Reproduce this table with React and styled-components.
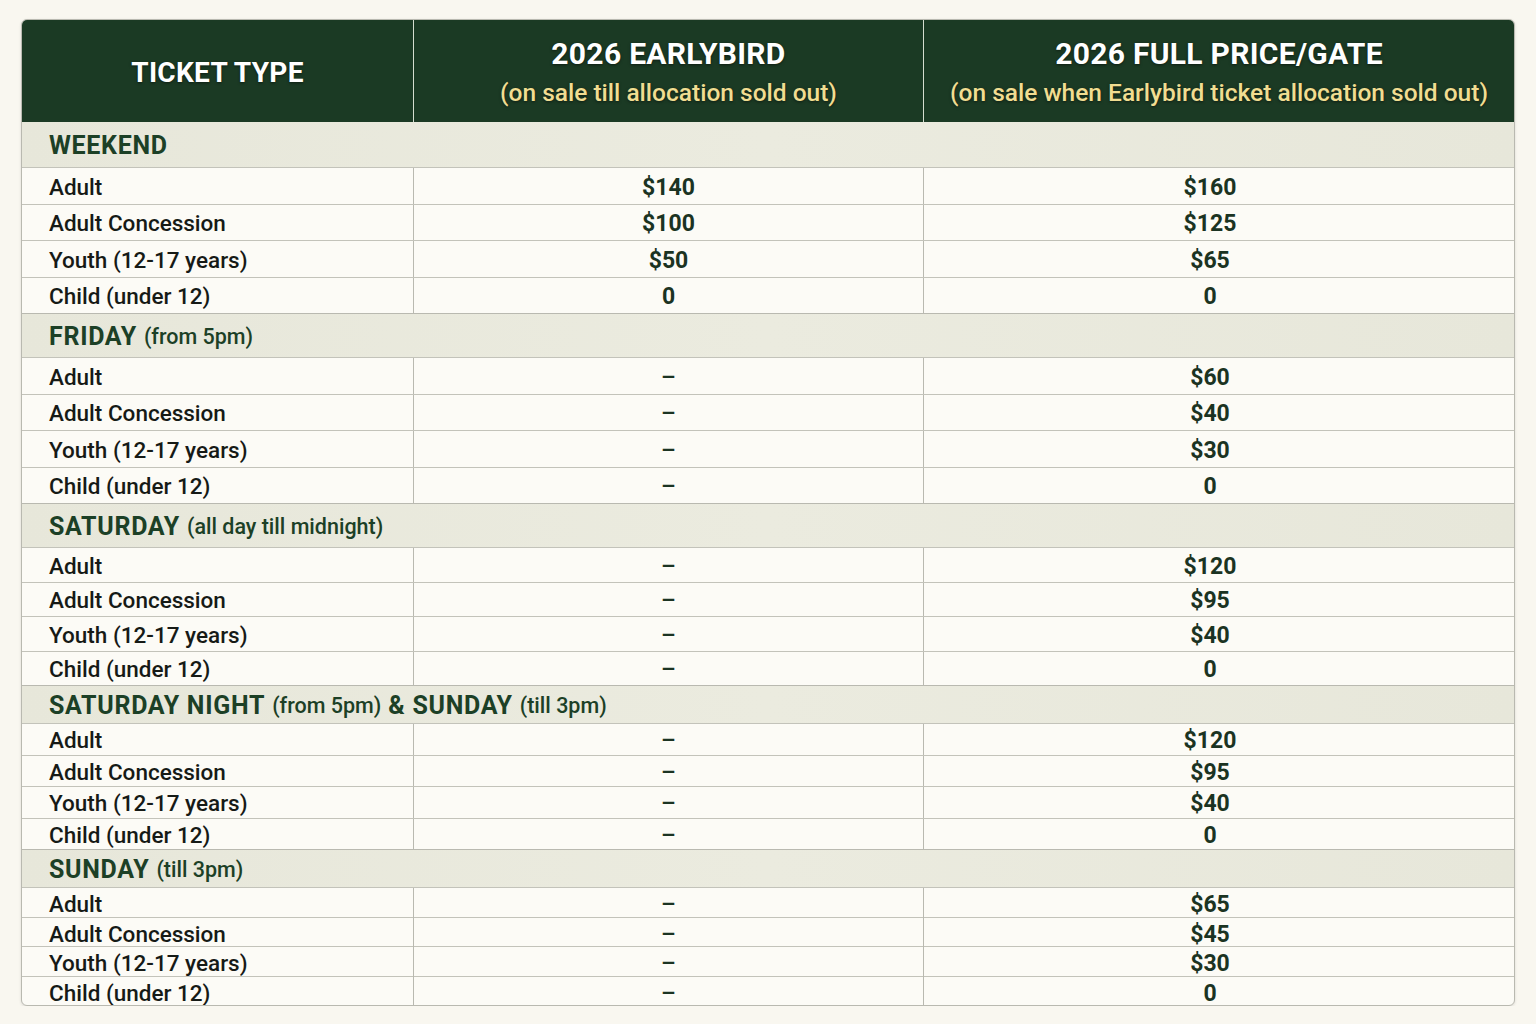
import styled, { createGlobalStyle } from 'styled-components';

const GlobalStyle = createGlobalStyle`
    *, *::before, *::after {
        box-sizing: border-box;
    }
    html, body {
        margin: 0;
        padding: 0;
        background: #f9f7f0;
        font-family: Roboto, "Liberation Sans", sans-serif;
    }
`;

const Page = styled.div`
    padding: 19px 21px 0 21px;
`;

const Table = styled.div`
    border: 1px solid #b9b9b0;
    border-radius: 6px;
    overflow: hidden;
    background: #fcfbf6;
    box-shadow: 0 1px 3px rgba(0, 0, 0, 0.12);
`;

const HeadRow = styled.div`
    display: grid;
    grid-template-columns: 391px 510px 1fr;
    height: 102px;
    background: #1b3a24;
`;

const HeadCell = styled.div`
    display: flex;
    flex-direction: column;
    align-items: center;
    justify-content: center;
    border-left: ${(p) => (p.first ? 'none' : '1.5px solid #d4dccf')};
    color: #ffffff;
    text-shadow: 0 1px 3px rgba(0, 0, 0, 0.5);
    padding-top: ${(p) => (p.first ? '4px' : '0')};
`;

const HeadTitle = styled.div`
    font-size: ${(p) => p.size || 30}px;
    font-weight: 700;
    letter-spacing: 0.3px;
    line-height: 36px;
`;

const HeadSub = styled.div`
    font-size: 24.5px;
    font-weight: 500;
    color: #f1dd91;
    line-height: 32px;
    margin-top: 5px;
    margin-bottom: -3px;
`;

const Section = styled.div`
    display: flex;
    align-items: center;
    height: ${(p) => p.h}px;
    padding-left: 27px;
    padding-top: 2px;
    background: linear-gradient(90deg, #e7e7da, #ebebdf 50%, #e7e7da);
    border-top: ${(p) => (p.first ? 'none' : '1.5px solid #b9b9b0')};
    color: #1c4026;
`;

const SectionName = styled.span`
    font-size: 25px;
    font-weight: 700;
    letter-spacing: 0.7px;
`;

const SectionNote = styled.span`
    font-size: 21.5px;
    font-weight: 500;
    margin-left: 7px;
    margin-right: 7px;
`;

const Row = styled.div`
    display: grid;
    grid-template-columns: 391px 510px 1fr;
    height: ${(p) => p.h}px;
    border-top: 1.5px solid #c3c3ba;
`;

const Label = styled.div`
    display: flex;
    align-items: center;
    padding-left: 27px;
    padding-top: 2px;
    font-size: 22.5px;
    font-weight: 500;
    color: #161a16;
`;

const Price = styled.div`
    display: flex;
    align-items: center;
    justify-content: center;
    padding-top: 3px;
    padding-right: ${(p) => (p.last ? '18px' : '0')};
    border-left: 1.5px solid #b9b9b0;
    font-size: 23px;
    font-weight: ${(p) => (p.dash ? 500 : 700)};
    color: #1b3322;
`;

const groups = [
    {
        name: 'WEEKEND',
        h: 45,
        rowH: 36.5,
        prices: [
            ['$140', '$160'],
            ['$100', '$125'],
            ['$50', '$65'],
            ['0', '0'],
        ],
    },
    {
        name: 'FRIDAY',
        note: '(from 5pm)',
        h: 44,
        rowH: 36.5,
        prices: [
            ['–', '$60'],
            ['–', '$40'],
            ['–', '$30'],
            ['–', '0'],
        ],
    },
    {
        name: 'SATURDAY',
        note: '(all day till midnight)',
        h: 44,
        rowH: 34.5,
        prices: [
            ['–', '$120'],
            ['–', '$95'],
            ['–', '$40'],
            ['–', '0'],
        ],
    },
    {
        name: 'SATURDAY NIGHT',
        note: '(from 5pm)',
        name2: '& SUNDAY',
        note2: '(till 3pm)',
        h: 38,
        rowH: 31.5,
        prices: [
            ['–', '$120'],
            ['–', '$95'],
            ['–', '$40'],
            ['–', '0'],
        ],
    },
    {
        name: 'SUNDAY',
        note: '(till 3pm)',
        h: 38,
        rowH: 29.5,
        prices: [
            ['–', '$65'],
            ['–', '$45'],
            ['–', '$30'],
            ['–', '0'],
        ],
    },
];

const labels = ['Adult', 'Adult Concession', 'Youth (12-17 years)', 'Child (under 12)'];

const App = () => {
    return (
        <Page>
            <GlobalStyle />
            <Table>
                <HeadRow>
                    <HeadCell first>
                        <HeadTitle size={28}>TICKET TYPE</HeadTitle>
                    </HeadCell>
                    <HeadCell>
                        <HeadTitle>2026 EARLYBIRD</HeadTitle>
                        <HeadSub>(on sale till allocation sold out)</HeadSub>
                    </HeadCell>
                    <HeadCell>
                        <HeadTitle>2026 FULL PRICE/GATE</HeadTitle>
                        <HeadSub>(on sale when Earlybird ticket allocation sold out)</HeadSub>
                    </HeadCell>
                </HeadRow>

                {groups.map((g, gi) => (
                    <div key={g.name + gi}>
                        <Section h={g.h} first={gi === 0}>
                            <SectionName>{g.name}</SectionName>
                            {g.note && <SectionNote>{g.note}</SectionNote>}
                            {g.name2 && <SectionName>{g.name2}</SectionName>}
                            {g.note2 && <SectionNote>{g.note2}</SectionNote>}
                        </Section>
                        {labels.map((label, i) => (
                            <Row key={label} h={g.rowH}>
                                <Label>{label}</Label>
                                <Price dash={g.prices[i][0] === '–'}>{g.prices[i][0]}</Price>
                                <Price last>{g.prices[i][1]}</Price>
                            </Row>
                        ))}
                    </div>
                ))}
            </Table>
        </Page>
    );
};

export default App;
